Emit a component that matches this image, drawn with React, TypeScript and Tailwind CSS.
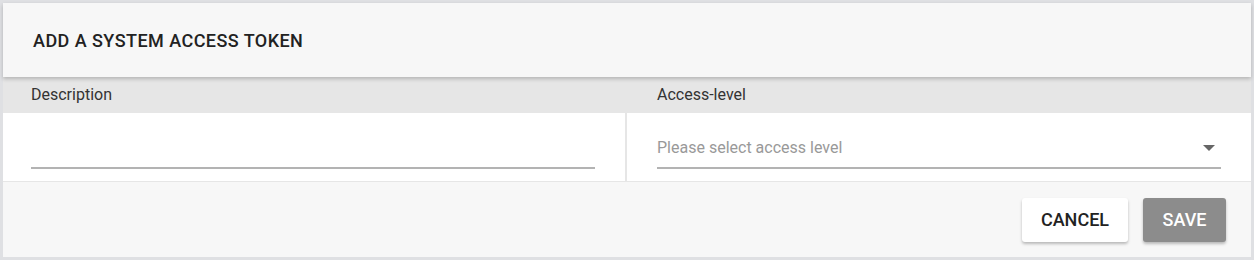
export default function App() {
  return (
    <div className="h-[260px] w-[1254px] bg-[#dfe0e3] p-[3px] font-['Roboto',sans-serif]">
      <div className="flex h-[254px] flex-col bg-white">
        <div className="relative z-10 flex h-[74px] items-center bg-[#f7f7f7] px-[30px] shadow-[0_2px_4px_rgba(0,0,0,0.22)]">
          <h3 className="text-[18px] font-medium tracking-[0.45px] uppercase text-[#222]">Add a system access token</h3>
        </div>

        <div className="grid h-[36px] grid-cols-[624px_1fr] items-center bg-[#e6e6e6] text-[16px] text-[#333]">
          <div className="pl-[28px]">Description</div>
          <div className="pl-[30px]">Access-level</div>
        </div>

        <div className="grid h-[68px] grid-cols-[622px_1fr]">
          <div className="flex items-end pb-[12px] pl-[28px] pr-[30px]">
            <input className="w-full border-b-2 border-[#b3b3b3] pb-[6px] text-[16px] text-[#333] outline-none" />
          </div>
          <div className="flex items-end border-l-2 border-[#e6e6e6] pb-[12px] pl-[30px] pr-[30px]">
            <div className="flex w-full items-center justify-between border-b-2 border-[#b3b3b3] pb-[7px] text-[16px] text-[#999]">
              <span>Please select access level</span>
              <svg width="12" height="6" viewBox="0 0 12 6" className="mr-[6px]">
                <path d="M0 0h12L6 6z" fill="#666" />
              </svg>
            </div>
          </div>
        </div>

        <div className="flex flex-1 items-center justify-end gap-[15px] border-t border-[#e6e6e6] bg-[#f7f7f7] pr-[25px]">
          <button className="h-[44px] w-[106px] rounded-[3px] bg-white text-[18px] font-medium text-[#222] shadow-[0_2px_3px_rgba(0,0,0,0.25)]">
            CANCEL
          </button>
          <button className="h-[44px] w-[83px] rounded-[3px] bg-[#8c8c8c] text-[18px] font-medium text-white shadow-[0_2px_3px_rgba(0,0,0,0.25)]">
            SAVE
          </button>
        </div>
      </div>
    </div>
  );
}
